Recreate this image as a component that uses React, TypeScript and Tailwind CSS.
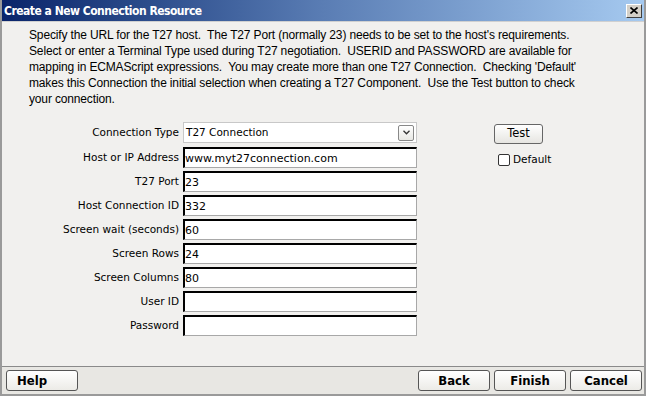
import React from 'react'

const fields = [
  { label: 'Host or IP Address', value: 'www.myt27connection.com' },
  { label: 'T27 Port', value: '23' },
  { label: 'Host Connection ID', value: '332' },
  { label: 'Screen wait (seconds)', value: '60' },
  { label: 'Screen Rows', value: '24' },
  { label: 'Screen Columns', value: '80' },
  { label: 'User ID', value: '' },
  { label: 'Password', value: '' },
]

const intro = [
  "Specify the URL for the T27 host.\u00a0 The T27 Port (normally 23) needs to be set to the host's requirements.",
  'Select or enter a Terminal Type used during T27 negotiation.\u00a0 USERID and PASSWORD are available for',
  "mapping in ECMAScript expressions.\u00a0 You may create more than one T27 Connection.\u00a0 Checking 'Default'",
  'makes this Connection the initial selection when creating a T27 Component.\u00a0 Use the Test button to check',
  'your connection.',
]

function FieldBox({ value }: { value: string }) {
  return (
    <div className="w-[234px] h-[21px] bg-white border-t-2 border-l-2 border-t-black border-l-black border-r border-b border-r-[#a8a8a8] border-b-[#a8a8a8] flex items-center text-[11px] text-black leading-none [font-family:'DejaVu_Sans',sans-serif]">
      {value}
    </div>
  )
}

function BarButton({ label, left }: { label: string; left?: boolean }) {
  return (
    <button
      className={`w-[72px] h-[21px] rounded-[3px] border border-[#555] bg-gradient-to-b from-white to-[#ecebe7] text-[13px] font-bold text-black leading-none [font-family:'DejaVu_Sans_Condensed','DejaVu_Sans',sans-serif] ${
        left ? 'text-left pl-[10px]' : ''
      }`}
    >
      {label}
    </button>
  )
}

export default function App() {
  return (
    <div className="w-[646px] h-[396px] bg-[#f1f0ee] border-2 border-[#9a9a9a] border-t-0 flex flex-col overflow-hidden">
      {/* title bar */}
      <div className="h-[22px] flex items-center justify-between pl-[2px] pr-[2px] bg-gradient-to-r from-[#0a246a] via-[#5a7db4] to-[#a6caf0] border-b border-[#d0d0d0]">
        <span className="text-white font-bold text-[12px] tracking-[-0.5px] leading-none [font-family:'DejaVu_Sans_Condensed','DejaVu_Sans',sans-serif]">
          Create a New Connection Resource
        </span>
        <div className="w-[16px] h-[14px] bg-[#d4d0c8] border border-t-white border-l-white border-r-[#404040] border-b-[#404040] flex items-center justify-center">
          <svg width="8" height="7" viewBox="0 0 8 7">
            <path d="M0.5 0.5 L7.5 6.5 M7.5 0.5 L0.5 6.5" stroke="black" strokeWidth="1.6" />
          </svg>
        </div>
      </div>

      {/* body */}
      <div className="flex-1 flex flex-col">
        <div className="pl-[27px] pt-[5px] text-[12px] leading-[16px] tracking-[-0.15px] text-black whitespace-nowrap [font-family:'Liberation_Sans',Arial,sans-serif]">
          {intro.map((line) => (
            <div key={line}>{line}</div>
          ))}
        </div>

        <div className="flex mt-[15px]">
          <div className="flex flex-col gap-[3px] text-[10.5px] text-black [font-family:'DejaVu_Sans',sans-serif]">
            <div className="flex items-center h-[21px] mb-[1px]">
              <span className="w-[181px] text-right pr-[4px]">Connection Type</span>
              <div className="w-[234px] h-[21px] bg-white border border-[#c8c8c8] flex items-center justify-between pl-[2px] pr-[2px]">
                <span className="text-[10.5px]">T27 Connection</span>
                <div className="w-[16px] h-[16px] border border-[#888] rounded-[2px] bg-gradient-to-b from-white to-[#e8e8e4] flex items-center justify-center">
                  <svg width="7" height="5" viewBox="0 0 7 5">
                    <path d="M0.5 0.8 L3.5 3.8 L6.5 0.8" fill="none" stroke="#333" strokeWidth="1.3" />
                  </svg>
                </div>
              </div>
            </div>
            {fields.map((f) => (
              <div key={f.label} className="flex items-center h-[21px]">
                <span className="w-[181px] text-right pr-[4px]">{f.label}</span>
                <FieldBox value={f.value} />
              </div>
            ))}
          </div>

          <div className="ml-[77px] flex flex-col pt-[2px]">
            <button className="w-[49px] h-[20px] rounded-[3px] border border-[#666] bg-gradient-to-b from-white to-[#e6e5e1] text-[11.5px] text-black leading-none [font-family:'DejaVu_Sans',sans-serif]">
              Test
            </button>
            <label className="flex items-center mt-[8px] ml-[4px] text-[10.5px] text-black [font-family:'DejaVu_Sans',sans-serif]">
              <span className="w-[12px] h-[12px] border border-[#333] rounded-[2px] bg-white mr-[3px]" />
              Default
            </label>
          </div>
        </div>
      </div>

      {/* bottom bar */}
      <div className="h-[28px] border-t border-[#8a8a8a] bg-[#e8e7e3] flex items-center justify-between pl-[4px] pr-[2px] pb-[1px]">
        <BarButton label="Help" left />
        <div className="flex gap-[4px]">
          <BarButton label="Back" />
          <BarButton label="Finish" />
          <BarButton label="Cancel" />
        </div>
      </div>
    </div>
  )
}
